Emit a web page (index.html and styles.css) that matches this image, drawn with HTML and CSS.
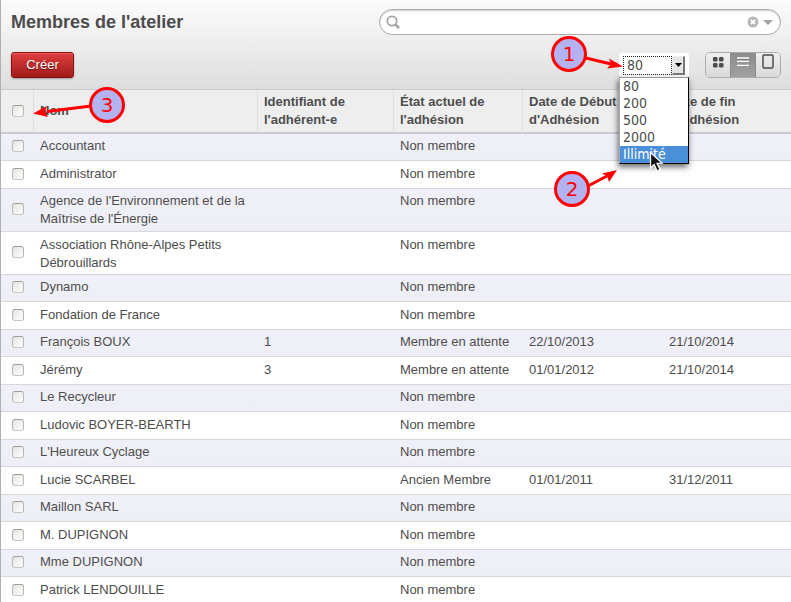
FILE: index.html
```html
<!DOCTYPE html>
<html lang="fr">
<head>
<meta charset="utf-8">
<title>Membres de l'atelier</title>
<link rel="stylesheet" href="styles.css">
</head>
<body>
<main class="app">
  <header class="toolbar">
    <div class="toolbar-row">
      <h1>Membres de l'atelier</h1>
      <form class="search">
        <svg class="search-icon" width="14" height="14" viewBox="0 0 14 14" aria-hidden="true"><circle cx="6" cy="6" r="4.700" fill="none" stroke="#a3a3a3" stroke-width="1.800"/><path d="M9.300 9.300 13 13" stroke="#a3a3a3" stroke-width="2.600"/></svg>
        <input type="text" aria-label="Rechercher">
        <button type="button" class="plain" aria-label="Effacer"><svg width="12" height="12" viewBox="0 0 12 12"><circle cx="6" cy="6" r="5.500" fill="#b5b5b5"/><path d="M3.800 3.800l4.400 4.400M8.200 3.800l-4.400 4.400" stroke="#fff" stroke-width="1.800"/></svg></button>
        <button type="button" class="plain" aria-label="Filtres"><svg width="10" height="12" viewBox="0 0 10 12"><path d="M0 4h10L5 9z" fill="#a3a3a3"/></svg></button>
      </form>
    </div>
    <div class="toolbar-row">
      <button type="button" class="create">Créer</button>
      <div class="actions">
        <div class="pager">
          <select class="limit" aria-label="Nombre de lignes">
            <option>80</option><option>200</option><option>500</option><option>2000</option><option>Illimité</option>
          </select>
          <span class="limit-arrow" aria-hidden="true"><svg width="7" height="4" viewBox="0 0 7 4"><path d="M0 0h7L3.500 4z" fill="#000"/></svg></span>
          <ul class="menu" role="listbox" aria-label="Nombre de lignes">
            <li role="option">80</li>
            <li role="option">200</li>
            <li role="option">500</li>
            <li role="option">2000</li>
            <li role="option" aria-selected="true">Illimité</li>
          </ul>
          <svg class="cursor" width="15" height="22" viewBox="0 0 15 22" aria-hidden="true"><path d="M1.500 1.500v15.200l3.600-3.200 3 6.500 3-1.400-3-6.200 5-.3z" fill="#111" stroke="#fff" stroke-width="1.300"/></svg>
          <svg class="callout callout-right" width="80" height="180" viewBox="0 0 80 180" aria-hidden="true">
            <circle cx="20" cy="19" r="16.500"/><path class="shaft" d="M37 23 62 29"/><path class="head" d="M74 31.500 58 33.500 62 29 60 23.500z"/>
            <text x="20" y="26">1</text>
            <circle cx="23" cy="154" r="16.500"/><path class="shaft" d="M39 151 58 141"/><path class="head" d="M68 135 60 147 58 141 53 138.500z"/>
            <text x="23" y="161">2</text>
          </svg>
        </div>
        <div class="views">
          <button type="button" aria-label="Kanban"><svg width="12" height="12" viewBox="0 0 12 12" fill="#4c4c4c"><rect x="1" y="1" width="4.500" height="4.500" rx="1.200"/><rect x="7" y="1" width="4.500" height="4.500" rx="1.200"/><rect x="1" y="7" width="4.500" height="4.500" rx="1.200"/><rect x="7" y="7" width="4.500" height="4.500" rx="1.200"/></svg></button>
          <button type="button" class="active" aria-label="Liste"><svg width="12" height="12" viewBox="0 0 12 12"><path d="M0 3h12M0 6.500h12M0 10.500h12" stroke="#6f6f6f"/><path d="M0 2h12M0 5.500h12M0 9.500h12" stroke="#fff" stroke-width="1.400"/></svg></button>
          <button type="button" aria-label="Formulaire"><svg width="12" height="15" viewBox="0 0 12 15"><rect x="1" y="1" width="10" height="13" rx="1" fill="none" stroke="#4c4c4c" stroke-width="1.500"/></svg></button>
        </div>
      </div>
    </div>
  </header>
  <section class="list">
  <table>
    <colgroup><col class="c-check"><col class="c-name"><col class="c-id"><col class="c-state"><col class="c-start"><col></colgroup>
    <thead><tr>
      <th><input type="checkbox" aria-label="Tout sélectionner"></th>
      <th>Nom</th><th>Identifiant de l'adhérent-e</th><th>État actuel de l'adhésion</th><th>Date de Début d'Adhésion</th><th>Date de fin d'Adhésion</th>
    </tr></thead>
    <tbody>
      <tr><td><input type="checkbox" aria-label="Accountant"></td><td>Accountant</td><td></td><td>Non membre</td><td></td><td></td></tr>
      <tr><td><input type="checkbox" aria-label="Administrator"></td><td>Administrator</td><td></td><td>Non membre</td><td></td><td></td></tr>
      <tr><td><input type="checkbox" aria-label="Agence de l'Environnement"></td><td>Agence de l'Environnement et de la Maîtrise de l'Énergie</td><td></td><td>Non membre</td><td></td><td></td></tr>
      <tr><td><input type="checkbox" aria-label="Association Rhône-Alpes"></td><td>Association Rhône-Alpes Petits Débrouillards</td><td></td><td>Non membre</td><td></td><td></td></tr>
      <tr><td><input type="checkbox" aria-label="Dynamo"></td><td>Dynamo</td><td></td><td>Non membre</td><td></td><td></td></tr>
      <tr><td><input type="checkbox" aria-label="Fondation de France"></td><td>Fondation de France</td><td></td><td>Non membre</td><td></td><td></td></tr>
      <tr><td><input type="checkbox" aria-label="François BOUX"></td><td>François BOUX</td><td>1</td><td>Membre en attente</td><td>22/10/2013</td><td>21/10/2014</td></tr>
      <tr><td><input type="checkbox" aria-label="Jérémy"></td><td>Jérémy</td><td>3</td><td>Membre en attente</td><td>01/01/2012</td><td>21/10/2014</td></tr>
      <tr><td><input type="checkbox" aria-label="Le Recycleur"></td><td>Le Recycleur</td><td></td><td>Non membre</td><td></td><td></td></tr>
      <tr><td><input type="checkbox" aria-label="Ludovic BOYER-BEARTH"></td><td>Ludovic BOYER-BEARTH</td><td></td><td>Non membre</td><td></td><td></td></tr>
      <tr><td><input type="checkbox" aria-label="L'Heureux Cyclage"></td><td>L'Heureux Cyclage</td><td></td><td>Non membre</td><td></td><td></td></tr>
      <tr><td><input type="checkbox" aria-label="Lucie SCARBEL"></td><td>Lucie SCARBEL</td><td></td><td>Ancien Membre</td><td>01/01/2011</td><td>31/12/2011</td></tr>
      <tr><td><input type="checkbox" aria-label="Maillon SARL"></td><td>Maillon SARL</td><td></td><td>Non membre</td><td></td><td></td></tr>
      <tr><td><input type="checkbox" aria-label="M. DUPIGNON"></td><td>M. DUPIGNON</td><td></td><td>Non membre</td><td></td><td></td></tr>
      <tr><td><input type="checkbox" aria-label="Mme DUPIGNON"></td><td>Mme DUPIGNON</td><td></td><td>Non membre</td><td></td><td></td></tr>
      <tr><td><input type="checkbox" aria-label="Patrick LENDOUILLE"></td><td>Patrick LENDOUILLE</td><td></td><td>Non membre</td><td></td><td></td></tr>
    </tbody>
  </table>
  <svg class="callout callout-left" width="100" height="40" viewBox="0 0 100 40" aria-hidden="true">
    <path class="shaft" d="M58 18 14 23.500"/><path class="head" d="M0 25.500 14 18 12 23.500 15 29z"/>
    <circle cx="74" cy="17" r="16.500"/><text x="74" y="24">3</text>
  </svg>
  </section>
</main>
</body>
</html>
```
FILE: styles.css
```css
* { box-sizing: border-box; }
body {
  margin: 0;
  color: #4c4c4c;
  font: 13px/18px "Liberation Sans", Arial, sans-serif;
  text-shadow: 0 1px 1px rgba(255, 255, 255, 0.5);
}
.app { border-left: 1px solid #afafb6; }
button, input, select { margin: 0; font: inherit; color: inherit; }
svg { display: block; }

.toolbar {
  display: flex;
  flex-direction: column;
  gap: 17px;
  padding: 9px 10px 11px;
  border-bottom: 1px solid #cacaca;
  background: linear-gradient(#fcfcfc, #dedede);
}
.toolbar-row { display: flex; align-items: center; justify-content: space-between; }
h1 { margin: 0; font-size: 18px; line-height: 26px; }

.search {
  display: flex;
  align-items: center;
  gap: 4px;
  width: 402px;
  height: 26px;
  padding: 0 7px 0 6px;
  border: 1px solid #ababab;
  border-radius: 13px;
  background: #fff;
  box-shadow: inset 0 1px 2px rgba(0, 0, 0, 0.2);
}
.search input { flex: 1; min-width: 0; border: 0; outline: 0; background: none; }
.plain { padding: 0; border: 0; background: none; }

.create {
  height: 26px;
  width: 63px;
  padding: 0;
  border: 1px solid #8a1010;
  border-radius: 3px;
  background: linear-gradient(#df3f3f, #a21a1a);
  box-shadow: 0 1px 2px rgba(0, 0, 0, 0.3), inset 0 1px 1px rgba(255, 255, 255, 0.2);
  color: #fff;
  text-shadow: 0 1px 1px rgba(0, 0, 0, 0.5);
}
.actions { display: flex; align-items: center; gap: 16px; }

.pager {
  position: relative;
  display: flex;
  width: 70px;
  height: 24px;
  padding: 3px 4px 3px 4px;
  border-radius: 3px;
  background: #fff;
  font: 14px/17px "DejaVu Sans Condensed", "DejaVu Sans", sans-serif;
  text-shadow: none;
}
.limit {
  flex: 1;
  min-width: 0;
  height: 19px;
  padding: 0 0 0 3px;
  border: 1px dotted #222;
  border-radius: 0;
  appearance: none;
  background: #fff;
}
.limit-arrow {
  display: grid;
  place-items: center;
  width: 13px;
  height: 19px;
  border: 1px solid #eee;
  border-right: 2px solid #777;
  border-bottom: 2px solid #777;
  background: #e6e6e6;
}
.menu {
  position: absolute;
  z-index: 2;
  top: 24px;
  left: 0;
  width: 70px;
  margin: 0;
  padding: 0;
  border: 1px solid #000;
  border-top-color: #999;
  border-left-color: #aaa;
  background: #fff;
  box-shadow: -1px 3px 6px rgba(0, 0, 0, 0.6);
  list-style: none;
}
.menu li { padding-left: 3px; }
.menu [aria-selected] { background: #4a90d9; color: #fff; }
.cursor { position: absolute; z-index: 3; top: 98px; left: 30px; }

.callout { position: absolute; z-index: 4; overflow: visible; pointer-events: none; }
.callout circle { fill: #b3b3f2; stroke: #f00; stroke-width: 3px; }
.callout .shaft { stroke: #f00; stroke-width: 3px; }
.callout .head { fill: #f00; }
.callout text {
  fill: #f00;
  font: 20px "DejaVu Sans", sans-serif;
  text-anchor: middle;
  text-shadow: none;
}
.callout-right { top: -18px; left: -70px; }
.callout-left { top: -2px; left: 32px; }

.views {
  display: flex;
  height: 26px;
  width: 76px;
  border: 1px solid #ababab;
  border-radius: 5px;
  overflow: hidden;
}
.views button {
  display: flex;
  flex: 1;
  justify-content: center;
  align-items: flex-start;
  padding: 3px 0 0;
  border: 0;
  background: linear-gradient(#efefef, #d9d9d9);
}
.views button:last-child { padding-top: 1px; }
.views .active {
  border: 1px solid #8c8c8c;
  border-width: 0 1px;
  background: linear-gradient(#8c8c8c, #a1a1a1);
}

.list { position: relative; }
table { width: 100%; border-collapse: separate; border-spacing: 0; table-layout: fixed; }
.c-check { width: 32px; }
.c-name { width: 224px; }
.c-id { width: 136px; }
.c-state { width: 129px; }
.c-start { width: 140px; }
th, td { text-align: left; }
th {
  padding: 3px 6px;
  border-bottom: 2px solid #cacaca;
  border-left: 1px solid #dfdfdf;
  background: #eee;
}
td { padding: 3px 6px 3px 7px; border-bottom: 1px solid #d8d8d8; vertical-align: top; }
tr > :first-child { padding: 0 0 0 11px; border-left: 0; vertical-align: middle; }
tbody tr { height: 27px; background: linear-gradient(#f0f0fa, #eeeef6); }
tbody tr:nth-child(even) { height: 28px; background: #fff; }
tbody tr:nth-child(even) td { padding-top: 4px; padding-bottom: 2px; }
tbody tr > td:first-child,
tbody tr:nth-child(even) > td:first-child { padding: 0 0 2px 11px; }
input[type="checkbox"] {
  display: block;
  width: 12px;
  height: 12px;
  appearance: none;
  border: 1px solid #a5a89d;
  border-color: #9b9f91 #b5b8ae #c5c8be;
  border-radius: 3px;
  background: linear-gradient(135deg, #e4e4e4, #fff);
}
```
